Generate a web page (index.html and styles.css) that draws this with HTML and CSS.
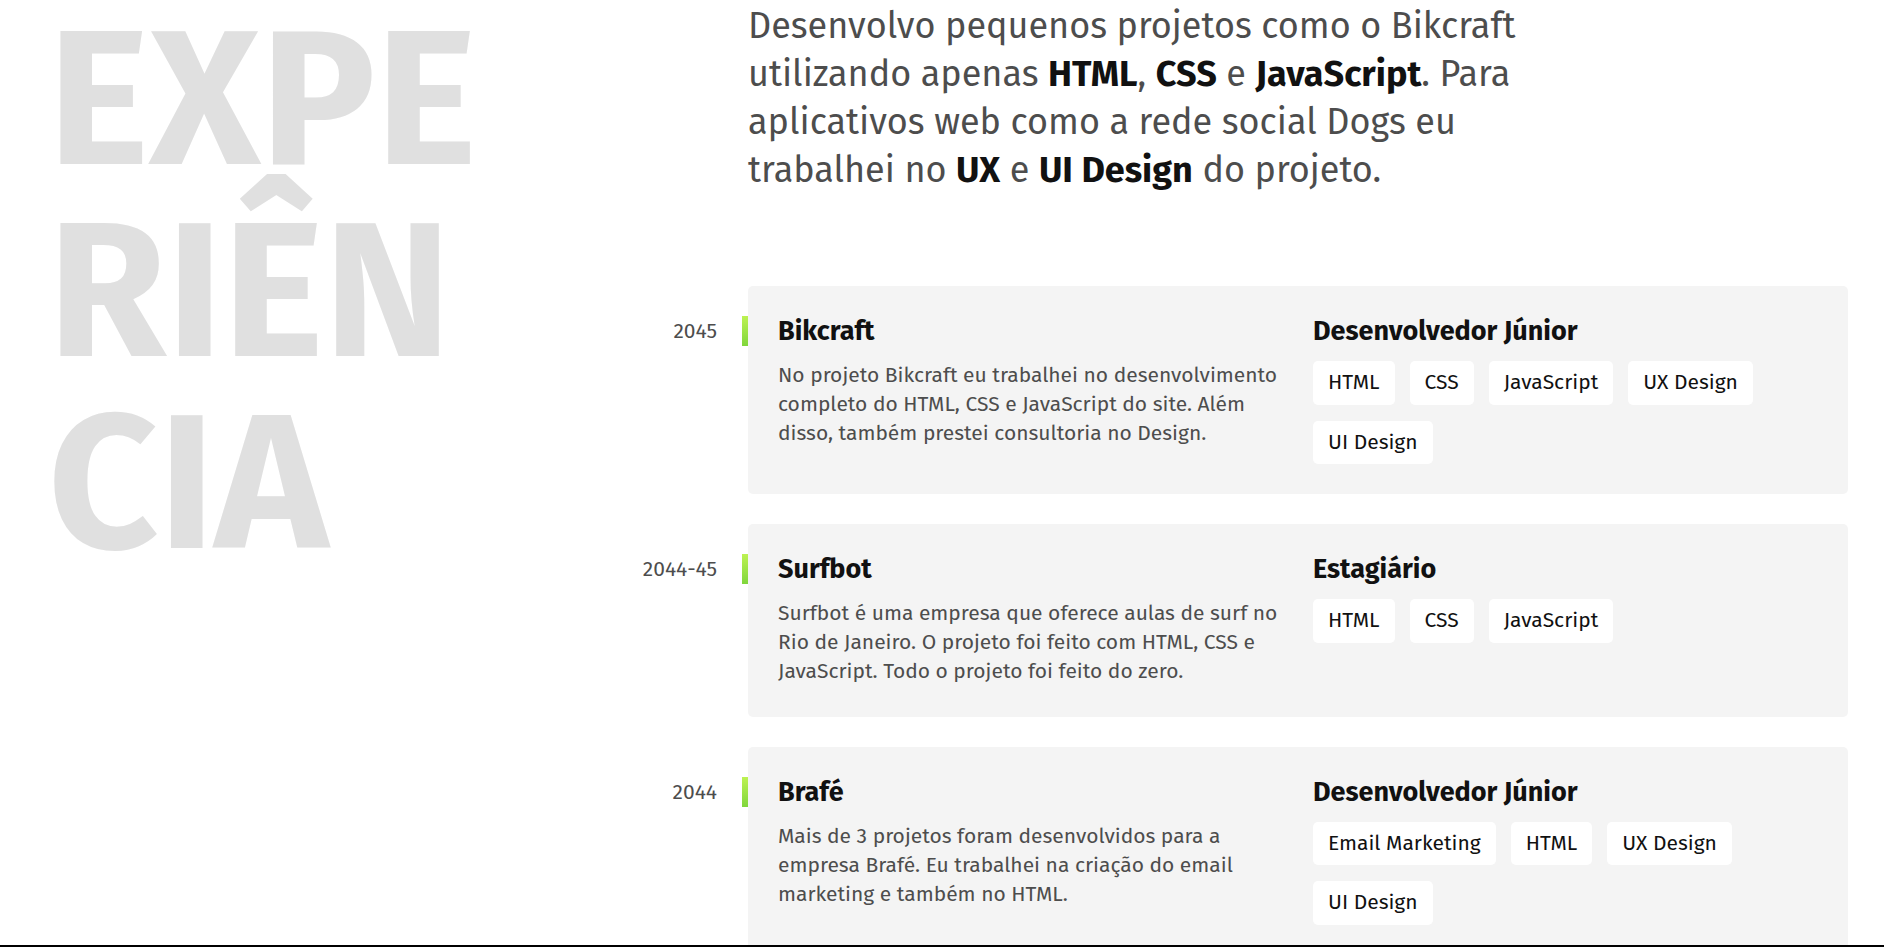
FILE: index.html
```html
<!DOCTYPE html>
<html lang="pt-BR">
<head>
<meta charset="utf-8">
<title>Experiência</title>
<link rel="stylesheet" href="styles.css">
</head>
<body>
<div class="viewport">
  <main class="experience">
    <h1 class="big-title">EXPE<wbr>RIÊN<wbr>CIA</h1>
    <div class="content">
      <p class="intro">Desenvolvo pequenos projetos como o Bikcraft utilizando apenas <strong>HTML</strong>, <strong>CSS</strong> e <strong>JavaScript</strong>. Para aplicativos web como a rede social Dogs eu trabalhei no <strong>UX</strong> e <strong>UI Design</strong> do projeto.</p>
      <ul class="jobs">
        <li class="job">
          <div class="job-year"><span class="year">2045</span><span class="bar"></span></div>
          <div class="card">
            <div class="card-col">
              <h2 class="card-title">Bikcraft</h2>
              <p class="card-desc">No projeto Bikcraft eu trabalhei no desenvolvimento completo do HTML, CSS e JavaScript do site. Além disso, também prestei consultoria no Design.</p>
            </div>
            <div class="card-col">
              <h3 class="card-title">Desenvolvedor Júnior</h3>
              <ul class="tags">
                <li class="tag">HTML</li>
                <li class="tag">CSS</li>
                <li class="tag">JavaScript</li>
                <li class="tag">UX Design</li>
                <li class="tag">UI Design</li>
              </ul>
            </div>
          </div>
        </li>
        <li class="job">
          <div class="job-year"><span class="year">2044-45</span><span class="bar"></span></div>
          <div class="card">
            <div class="card-col">
              <h2 class="card-title">Surfbot</h2>
              <p class="card-desc">Surfbot é uma empresa que oferece aulas de surf no Rio de Janeiro. O projeto foi feito com HTML, CSS e JavaScript. Todo o projeto foi feito do zero.</p>
            </div>
            <div class="card-col">
              <h3 class="card-title">Estagiário</h3>
              <ul class="tags">
                <li class="tag">HTML</li>
                <li class="tag">CSS</li>
                <li class="tag">JavaScript</li>
              </ul>
            </div>
          </div>
        </li>
        <li class="job">
          <div class="job-year"><span class="year">2044</span><span class="bar"></span></div>
          <div class="card">
            <div class="card-col">
              <h2 class="card-title">Brafé</h2>
              <p class="card-desc">Mais de 3 projetos foram desenvolvidos para a empresa Brafé. Eu trabalhei na criação do email marketing e também no HTML.</p>
            </div>
            <div class="card-col">
              <h3 class="card-title">Desenvolvedor Júnior</h3>
              <ul class="tags">
                <li class="tag">Email Marketing</li>
                <li class="tag">HTML</li>
                <li class="tag">UX Design</li>
                <li class="tag">UI Design</li>
              </ul>
            </div>
          </div>
        </li>
      </ul>
    </div>
  </main>
</div>
</body>
</html>
```
FILE: styles.css
```css
* { box-sizing: border-box; }

html, body {
  margin: 0;
  padding: 0;
  background: #fff;
}

body {
  font-family: "Fira Sans", "Open Sans", "Liberation Sans", sans-serif;
  color: #111;
}

.viewport {
  height: 947px;
  overflow: hidden;
  border-bottom: 2px solid #000;
}

.experience {
  display: grid;
  grid-template-columns: 640px 1208px;
  padding-right: 36px;
}

.big-title {
  margin: 4px 0 0 0;
  padding-left: 48px;
  width: min-content;
  font-size: 192px;
  line-height: 1;
  font-weight: 700;
  color: #e0e0e0;
}

.content {
  padding-top: 2px;
}

.intro {
  margin: 0 0 0 108px;
  max-width: 800px;
  font-size: 36px;
  line-height: 48px;
  color: #4d4d4d;
}

.intro strong {
  color: #111;
  font-weight: 700;
}

.jobs {
  list-style: none;
  margin: 92px 0 0 0;
  padding: 0;
  display: flex;
  flex-direction: column;
  gap: 30px;
}

.job {
  display: grid;
  grid-template-columns: 108px 1fr;
}

.job-year {
  display: flex;
  justify-content: flex-end;
  align-items: flex-start;
  gap: 25px;
  padding-top: 30px;
}

.year {
  font-size: 21px;
  line-height: 30px;
  color: #4d4d4d;
  white-space: nowrap;
}

.bar {
  flex: 0 0 6px;
  width: 6px;
  height: 30px;
  background: linear-gradient(#bdf252, #80d63c);
}

.card {
  display: grid;
  grid-template-columns: 1fr 1fr;
  column-gap: 30px;
  padding: 30px;
  background: #f4f4f4;
  border-radius: 5px;
}

.card-col {
  min-width: 0;
}

.card-title {
  margin: 0;
  font-size: 27px;
  line-height: 30px;
  font-weight: 700;
  color: #111;
}

.card-desc {
  margin: 15px 0 0 0;
  font-size: 21px;
  line-height: 29.2px;
  color: #4d4d4d;
}

.tags {
  list-style: none;
  margin: 15px 0 0 0;
  padding: 0;
  display: flex;
  flex-wrap: wrap;
  gap: 16px 15px;
}

.tag {
  background: #fff;
  border-radius: 5px;
  padding: 8px 15px;
  font-size: 21px;
  line-height: 27.5px;
  color: #111;
}
```
